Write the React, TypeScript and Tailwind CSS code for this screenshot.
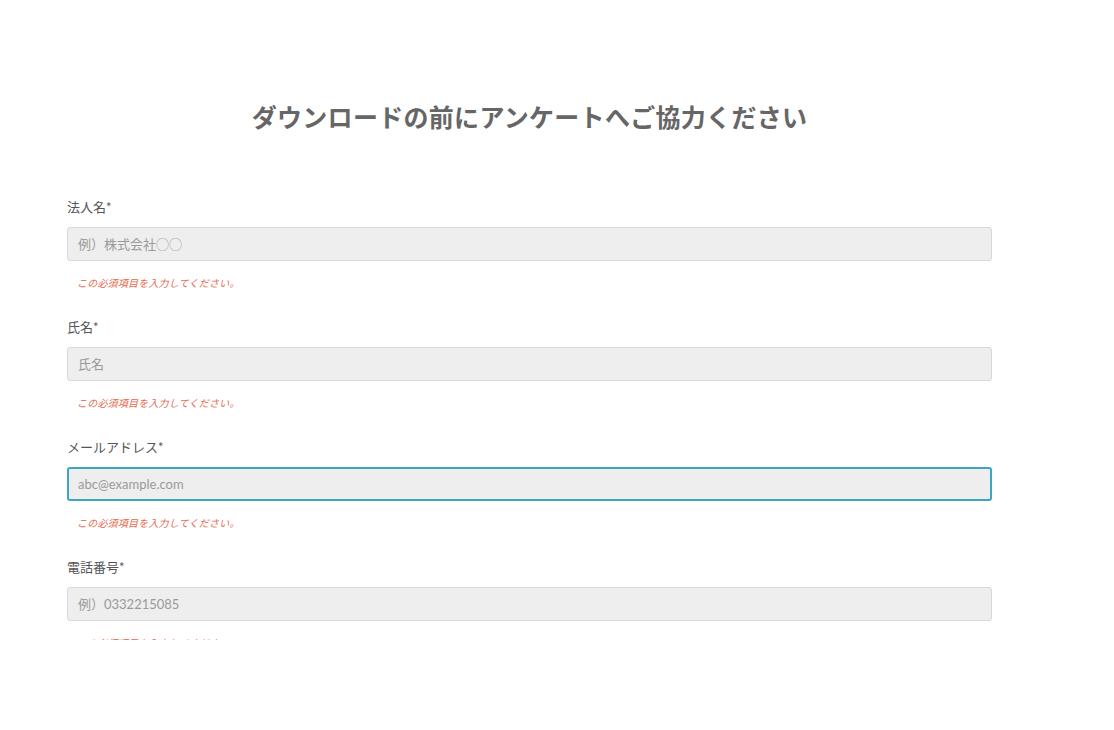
import { useState } from "react";

const fields = [
    { name: "company", label: "法人名*", placeholder: "例）株式会社◯◯", type: "text" },
    { name: "fullname", label: "氏名*", placeholder: "氏名", type: "text" },
    { name: "email", label: "メールアドレス*", placeholder: "abc@example.com", type: "email", focused: true },
    { name: "tel", label: "電話番号*", placeholder: "例）0332215085", type: "tel" },
];

const SurveyForm = () => {
    const [values, setValues] = useState<Record<string, string>>({});

    return (
        <div className="h-[640px] overflow-hidden bg-white font-['Lato','Noto_Sans_CJK_JP',sans-serif]">
            <div className="ml-[67px] w-[925px] pt-[99px]">
                <h1 className="text-center text-[25px] leading-[36px] font-bold text-[#666666] tracking-[0.3px]">
                    ダウンロードの前にアンケートへご協力ください
                </h1>
                <form className="mt-[63px]" onSubmit={(e) => e.preventDefault()}>
                    {fields.map((f) => (
                        <div key={f.name} className="mb-[28px]">
                            <label className="block text-[13px] leading-[18px] text-[#555555]">{f.label}</label>
                            <input
                                type={f.type}
                                name={f.name}
                                placeholder={f.placeholder}
                                value={values[f.name] ?? ""}
                                onChange={(e) => setValues({ ...values, [f.name]: e.target.value })}
                                className={
                                    f.focused
                                        ? "mt-[11px] block h-[34px] w-full rounded-[3px] border-2 border-[#3aa6bf] bg-[#eeeeee] px-[9px] text-[13px] text-[#555] placeholder:text-[#9a9a9a] outline-none"
                                        : "mt-[11px] block h-[34px] w-full rounded-[3px] border border-[#d8d8d8] bg-[#eeeeee] px-[10px] text-[13px] text-[#555] placeholder:text-[#9a9a9a] outline-none"
                                }
                            />
                            <p className="mt-[15px] pl-[10px] text-[10px] leading-[14px] italic tracking-[0.2px] text-[#e8674d]">
                                この必須項目を入力してください。
                            </p>
                        </div>
                    ))}
                </form>
            </div>
        </div>
    );
};

export default function App() {
    return <SurveyForm />;
}
